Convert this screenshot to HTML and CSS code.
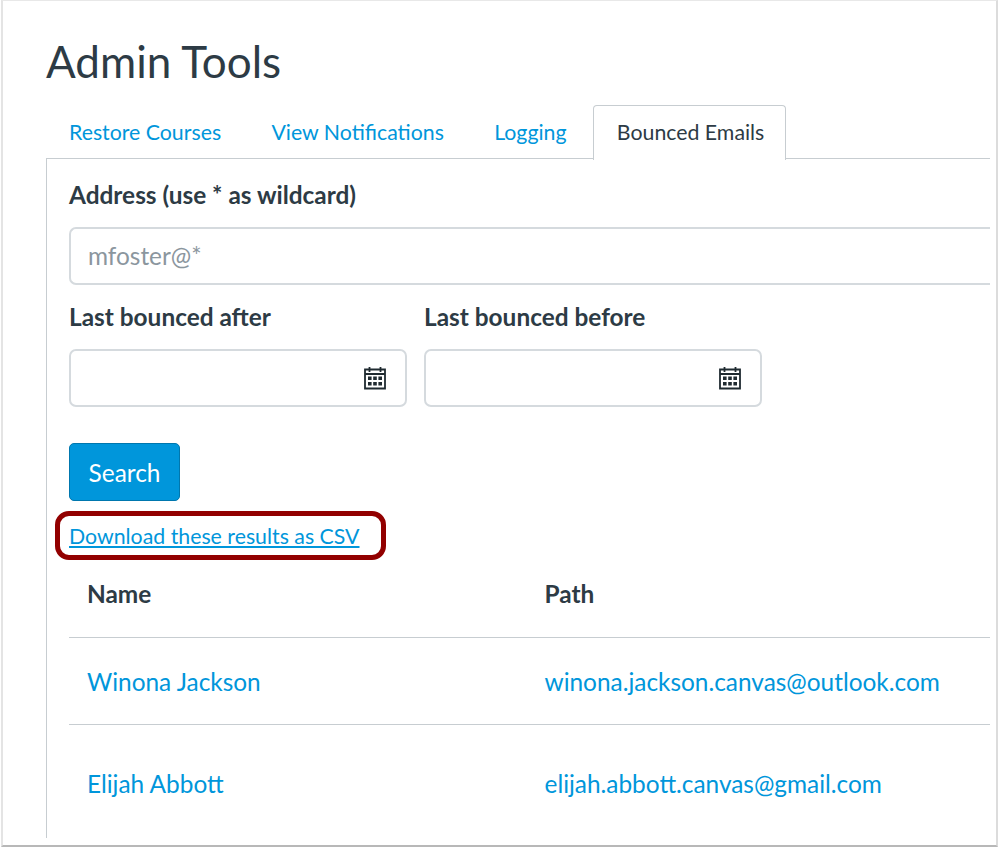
FILE: index.html
```html
<!DOCTYPE html>
<html lang="en">
<head>
<meta charset="utf-8">
<title>Admin Tools</title>
<link rel="stylesheet" href="styles.css">
</head>
<body>
<div class="frame">
  <h1 class="title">Admin Tools</h1>
  <ul class="tabs">
    <li class="tab"><a href="#">Restore Courses</a></li>
    <li class="tab"><a href="#">View Notifications</a></li>
    <li class="tab"><a href="#">Logging</a></li>
    <li class="tab active">Bounced Emails</li>
  </ul>
  <div class="panel">
    <label class="label label-address">Address (use * as wildcard)</label>
    <div class="input input-wide">mfoster@*</div>
    <div class="dates">
      <div class="date-field">
        <label class="label">Last bounced after</label>
        <div class="input input-date">
          <svg class="cal" viewBox="0 0 22 24" width="22" height="24" aria-hidden="true">
            <path class="cal-line" d="M1 3.5h20v19H1zM1 8h20M5.5 1v5M16.5 1v5"/>
            <path class="cal-fill" d="M4 10.5h3.6v3.6H4zM9.2 10.5h3.6v3.6H9.2zM14.4 10.5H18v3.6h-3.6zM4 16h3.6v3.6H4zM9.2 16h3.6v3.6H9.2zM14.4 16H18v3.6h-3.6z"/>
          </svg>
        </div>
      </div>
      <div class="date-field">
        <label class="label">Last bounced before</label>
        <div class="input input-date">
          <svg class="cal" viewBox="0 0 22 24" width="22" height="24" aria-hidden="true">
            <path class="cal-line" d="M1 3.5h20v19H1zM1 8h20M5.5 1v5M16.5 1v5"/>
            <path class="cal-fill" d="M4 10.5h3.6v3.6H4zM9.2 10.5h3.6v3.6H9.2zM14.4 10.5H18v3.6h-3.6zM4 16h3.6v3.6H4zM9.2 16h3.6v3.6H9.2zM14.4 16H18v3.6h-3.6z"/>
          </svg>
        </div>
      </div>
    </div>
    <button class="search" type="button">Search</button>
    <div class="download"><a href="#">Download these results as CSV</a></div>
    <table class="results">
      <thead>
        <tr class="row-head"><th class="col-name">Name</th><th>Path</th></tr>
      </thead>
      <tbody>
        <tr class="row-one"><td><a href="#">Winona Jackson</a></td><td><a href="#">winona.jackson.canvas@outlook.com</a></td></tr>
        <tr class="row-two"><td><a href="#">Elijah Abbott</a></td><td><a href="#">elijah.abbott.canvas@gmail.com</a></td></tr>
      </tbody>
    </table>
  </div>
</div>
</body>
</html>
```
FILE: styles.css
```css
* { box-sizing: border-box; }
html, body { margin: 0; padding: 0; background: #fff; }
body { font-family: Lato, "Liberation Sans", sans-serif; font-size: 24.4px; color: #2d3b45; width: 999px; height: 848px; overflow: hidden; }
a { color: #0096db; text-decoration: none; }
.frame { margin-left: 1px; width: 997px; height: 847px; border-top: 1px solid #e8e8e8; border-left: 2px solid #e4e4e4; border-right: 2px solid #dcdcdc; border-bottom: 2px solid #b8b8b8; padding: 33px 6px 0 43px; overflow: hidden; }
.title { margin: 0; font-size: 44px; font-weight: 400; line-height: 54px; height: 71px; }
.tabs { list-style: none; margin: 0; padding: 0 0 0 23px; display: flex; height: 53px; font-size: 21.3px; }
.tab { line-height: 54px; margin-right: 50.3px; }
.tab.active { margin: 0 0 -1px -24px; padding: 0 21px 0 23px; height: 55px; line-height: 52px; background: #fff; border: 1px solid #c7cdd1; border-bottom: 0; border-radius: 4px 4px 0 0; position: relative; z-index: 1; }
.panel { border-top: 1px solid #c7cdd1; border-left: 1px solid #c7cdd1; height: 680px; padding: 20px 0 0 22px; }
.label { display: block; font-weight: 700; line-height: 32px; }
.input { border: 2px solid #d5dade; border-radius: 7px; height: 58px; background: #fff; }
.input-wide { margin-top: 16px; width: 100%; padding-left: 17px; line-height: 54px; color: #8b969e; border-right: 0; border-radius: 7px 0 0 7px; }
.dates { display: flex; gap: 17px; margin-top: 16px; }
.date-field { width: 338px; }
.input-date { margin-top: 16px; display: flex; align-items: center; justify-content: flex-end; padding-right: 19px; }
.cal-line { fill: none; stroke: #1f2a30; stroke-width: 1.8; }
.cal-fill { fill: #1f2a30; }
.search { display: block; margin-top: 36px; width: 111px; height: 58px; padding: 0; font: inherit; color: #fff; background: #0096db; border: 1px solid #0077ae; border-radius: 5px; }
.download { margin: 10px 0 0 -14px; width: 331px; height: 49px; border: 5px solid #920000; border-radius: 14px; padding-left: 9px; line-height: 40px; font-size: 21.3px; }
.download a { text-decoration: underline; }
.results { border-collapse: collapse; width: 100%; }
.results th, .results td { text-align: left; padding: 0 0 0 18px; border-bottom: 1px solid #c7cdd1; }
.results th { font-weight: 700; padding-bottom: 10px; }
.results .row-one td { padding-top: 2px; }
.col-name { width: 457.5px; }
.row-head { height: 77px; }
.row-one { height: 87px; }
.results .row-two td { border-bottom: 0; padding-top: 44px; padding-bottom: 28px; }
```
